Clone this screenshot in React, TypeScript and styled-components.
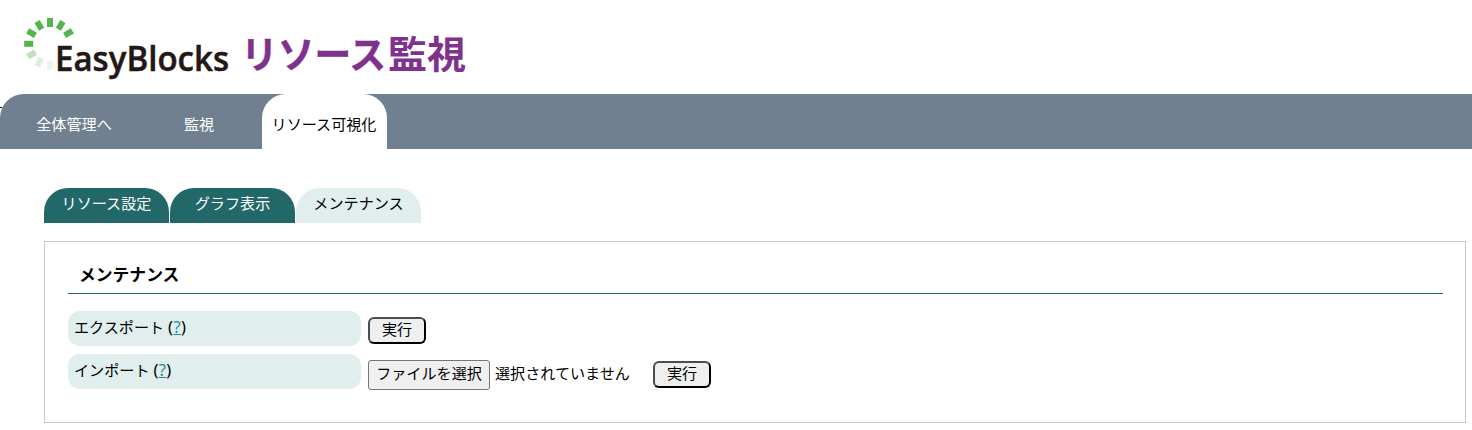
import React from 'react';
import styled, { createGlobalStyle, css } from 'styled-components';

const GlobalStyle = createGlobalStyle`
  *, *::before, *::after { box-sizing: border-box; }
  body {
    margin: 0;
    background: #fff;
    color: #000;
    font: 15.1px/22px "Noto Sans", "Noto Sans CJK JP", sans-serif;
  }
`;

const Header = styled.header`
  height: 94px;
`;

const Logo = styled.svg`
  display: block;
`;

const MainNav = styled.nav`
  position: relative;
  display: flex;
  height: 55px;
  padding-left: 12px;
  background: #708090;
  border-top-left-radius: 24px;

  &::before {
    content: '';
    position: absolute;
    z-index: -1;
    left: 0;
    top: 13px;
    width: 2px;
    height: 1px;
    background: #000;
  }
`;

const MainTab = styled.a<{ $active?: boolean }>`
  width: 125px;
  padding: 19px 1px 0 0;
  text-align: center;
  white-space: nowrap;
  color: #fff;
  ${({ $active }) =>
    $active &&
    css`
      background: #fff;
      color: #000;
      border-radius: 24px 24px 0 0;
    `}
`;

const Content = styled.main`
  padding: 39px 6px 0 44px;
`;

const SubNav = styled.nav`
  display: flex;
  gap: 1px;
  margin-bottom: 18px;
`;

const SubTab = styled.a<{ $active?: boolean }>`
  width: 125px;
  height: 35px;
  padding-top: 4px;
  text-align: center;
  border-radius: 24px 24px 0 0;
  background: ${({ $active }) => ($active ? '#e0eeed' : '#236868')};
  color: ${({ $active }) => ($active ? '#000' : '#fff')};
`;

const Panel = styled.section`
  height: 182px;
  padding: 18px 22px 0 23px;
  border: 1px solid #c8c8c8;
`;

const Title = styled.h2`
  height: 34px;
  margin: 0 0 17px;
  padding: 4px 11px 0;
  font-size: 16.8px;
  line-height: 22px;
  font-weight: 700;
  border-bottom: 1px solid #236868;
`;

const Row = styled.div`
  display: flex;
  height: 35px;
  margin-bottom: 8px;
`;

const Label = styled.div`
  width: 293px;
  margin-right: 7px;
  padding: 5px 6px;
  border-radius: 12px;
  background: #e0eeed;
`;

const Help = styled.span`
  font-size: 16.5px;
  line-height: 20px;
  letter-spacing: 0.4px;
`;

const HelpLink = styled.a`
  color: #1f9090;
  text-decoration: underline;
`;

const RunButton = styled.button<{ $top: number }>`
  width: 58px;
  height: 27px;
  margin-top: ${({ $top }) => $top}px;
  padding: 0 0 2px;
  border: 2px solid;
  border-color: #4c4c4c #000 #000 #4c4c4c;
  border-radius: 6px;
  background: #efefef;
  color: #000;
  font: inherit;
  line-height: 21px;
`;

const FileButton = styled.button`
  width: 122px;
  height: 30px;
  margin-top: 6px;
  padding: 0 0 4px;
  border: 1px solid #767676;
  border-radius: 3px;
  background: #efefef;
  color: #000;
  font: inherit;
  white-space: nowrap;
`;

const FileStatus = styled.span`
  width: 158px;
  margin: 8px 0 0 5px;
`;

const marks = [
  { angle: 0, opacity: 1 },
  { angle: 30, opacity: 1 },
  { angle: 60, opacity: 1 },
  { angle: 270, opacity: 1 },
  { angle: 300, opacity: 1 },
  { angle: 330, opacity: 1 },
  { angle: 240, opacity: 0.38 },
  { angle: 210, opacity: 0.2 },
  { angle: 180, opacity: 0.12 },
];

export default function App() {
  return (
    <>
      <GlobalStyle />
      <Header>
        <Logo width="480" height="94" viewBox="0 0 480 94" role="img" aria-label="EasyBlocks リソース監視">
          {marks.map(({ angle, opacity }) => (
            <rect
              key={angle}
              x="47"
              y="18"
              width="6"
              height="9"
              fill="#54b54a"
              opacity={opacity}
              transform={`rotate(${angle} 50 43.8)`}
            />
          ))}
          <text
            x="55"
            y="71"
            fontFamily="'Open Sans', 'Noto Sans', sans-serif"
            fontSize="35"
            fontWeight="600"
            fill="#231815"
            stroke="#231815"
            strokeWidth="0.5"
            textLength="174"
            lengthAdjust="spacingAndGlyphs"
          >
            EasyBlocks
          </text>
          <g
            fontFamily="'Noto Sans CJK JP', sans-serif"
            fontSize="38"
            fontWeight="700"
            fill="#7f318e"
          >
            <text x="241" y="68" textLength="145" lengthAdjust="spacingAndGlyphs" stroke="#7f318e" strokeWidth="0.5">
              リソース
            </text>
            <text x="388" y="68" textLength="78" lengthAdjust="spacingAndGlyphs">
              監視
            </text>
          </g>
        </Logo>
      </Header>
      <MainNav>
        <MainTab>全体管理へ</MainTab>
        <MainTab>監視</MainTab>
        <MainTab $active>リソース可視化</MainTab>
      </MainNav>
      <Content>
        <SubNav>
          <SubTab>リソース設定</SubTab>
          <SubTab>グラフ表示</SubTab>
          <SubTab $active>メンテナンス</SubTab>
        </SubNav>
        <Panel>
          <Title>メンテナンス</Title>
          <Row>
            <Label>
              エクスポート <Help>(<HelpLink>?</HelpLink>)</Help>
            </Label>
            <RunButton $top={6}>実行</RunButton>
          </Row>
          <Row>
            <Label>
              インポート <Help>(<HelpLink>?</HelpLink>)</Help>
            </Label>
            <FileButton>ファイルを選択</FileButton>
            <FileStatus>選択されていません</FileStatus>
            <RunButton $top={7}>実行</RunButton>
          </Row>
        </Panel>
      </Content>
    </>
  );
}
